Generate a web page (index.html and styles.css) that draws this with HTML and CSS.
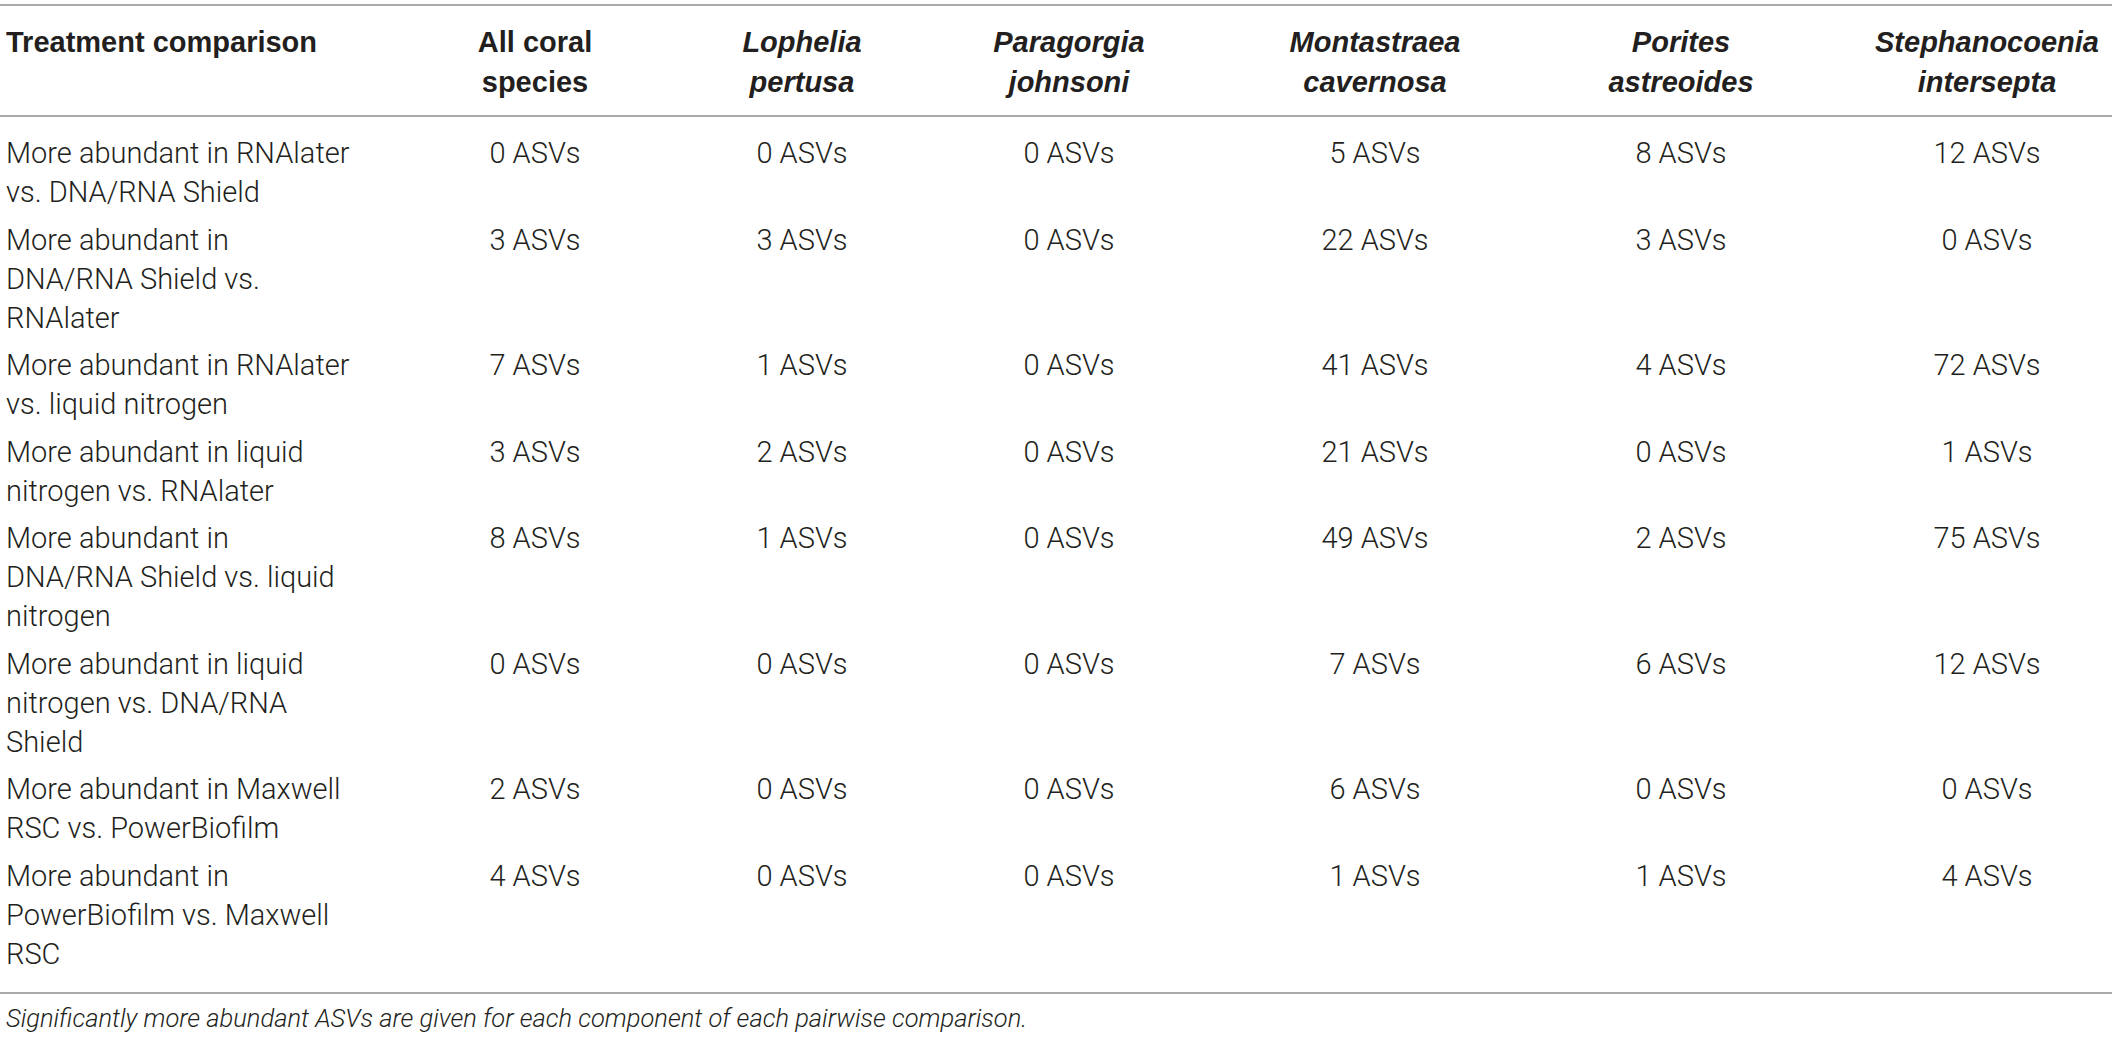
FILE: index.html
```html
<!DOCTYPE html>
<html lang="en">
<head>
  <meta charset="UTF-8">
  <title>Differentially abundant ASVs by treatment</title>
  <link rel="stylesheet" href="styles.css">
</head>
<body>
  <!-- ASV 비교 표 -->
  <table class="asv-table">
    <colgroup>
      <col class="col-treat">
      <col class="col-wide">
      <col class="col-narrow">
      <col class="col-wide">
      <col class="col-mid">
      <col class="col-wide">
      <col class="col-mid">
    </colgroup>
    <thead>
      <tr>
        <th class="treat">Treatment comparison</th>
        <th>All coral<br>species</th>
        <th class="species">Lophelia<br>pertusa</th>
        <th class="species">Paragorgia<br>johnsoni</th>
        <th class="species">Montastraea<br>cavernosa</th>
        <th class="species">Porites<br>astreoides</th>
        <th class="species">Stephanocoenia<br>intersepta</th>
      </tr>
    </thead>
    <tbody>
      <tr>
        <td class="treat">More abundant in RNAlater<br>vs. DNA/RNA Shield</td>
        <td>0 ASVs</td><td>0 ASVs</td><td>0 ASVs</td><td>5 ASVs</td><td>8 ASVs</td><td>12 ASVs</td>
      </tr>
      <tr>
        <td class="treat">More abundant in<br>DNA/RNA Shield vs.<br>RNAlater</td>
        <td>3 ASVs</td><td>3 ASVs</td><td>0 ASVs</td><td>22 ASVs</td><td>3 ASVs</td><td>0 ASVs</td>
      </tr>
      <tr>
        <td class="treat">More abundant in RNAlater<br>vs. liquid nitrogen</td>
        <td>7 ASVs</td><td>1 ASVs</td><td>0 ASVs</td><td>41 ASVs</td><td>4 ASVs</td><td>72 ASVs</td>
      </tr>
      <tr>
        <td class="treat">More abundant in liquid<br>nitrogen vs. RNAlater</td>
        <td>3 ASVs</td><td>2 ASVs</td><td>0 ASVs</td><td>21 ASVs</td><td>0 ASVs</td><td>1 ASVs</td>
      </tr>
      <tr>
        <td class="treat">More abundant in<br>DNA/RNA Shield vs. liquid<br>nitrogen</td>
        <td>8 ASVs</td><td>1 ASVs</td><td>0 ASVs</td><td>49 ASVs</td><td>2 ASVs</td><td>75 ASVs</td>
      </tr>
      <tr>
        <td class="treat">More abundant in liquid<br>nitrogen vs. DNA/RNA<br>Shield</td>
        <td>0 ASVs</td><td>0 ASVs</td><td>0 ASVs</td><td>7 ASVs</td><td>6 ASVs</td><td>12 ASVs</td>
      </tr>
      <tr>
        <td class="treat">More abundant in Maxwell<br>RSC vs. PowerBiofilm</td>
        <td>2 ASVs</td><td>0 ASVs</td><td>0 ASVs</td><td>6 ASVs</td><td>0 ASVs</td><td>0 ASVs</td>
      </tr>
      <tr>
        <td class="treat">More abundant in<br>PowerBiofilm vs. Maxwell<br>RSC</td>
        <td>4 ASVs</td><td>0 ASVs</td><td>0 ASVs</td><td>1 ASVs</td><td>1 ASVs</td><td>4 ASVs</td>
      </tr>
    </tbody>
  </table>
  <p class="note">Significantly more abundant ASVs are given for each component of each pairwise comparison.</p>
</body>
</html>
```

FILE: styles.css
```css
/* 기본 리셋 */
* { margin: 0; padding: 0; box-sizing: border-box; }
body {
  font-family: Roboto, 'Liberation Sans', Arial, sans-serif;
  font-weight: 300;
  color: #231f20;
  background-color: #fff;
  padding-top: 4px;
}
/* 표 */
.asv-table {
  width: 2112px;
  table-layout: fixed;
  border-collapse: separate;
  border-spacing: 0;
  font-size: 29px;
  line-height: 39px;
}
.col-treat { width: 354px; }
.col-wide { width: 362px; }
.col-narrow { width: 172px; }
.col-mid { width: 250px; }
/* 헤더 */
.asv-table th {
  font-family: 'Liberation Sans', Arial, sans-serif;
  font-weight: 700;
  text-align: center;
  vertical-align: top;
  line-height: 40px;
  padding: 16px 0 13px;
  border-top: 2px solid #aaa;
  border-bottom: 2px solid #aaa;
}
.asv-table th.species {
  font-style: italic;
}
.asv-table .treat {
  text-align: left;
  padding-left: 6px;
}
/* 본문 행 */
.asv-table td {
  text-align: center;
  vertical-align: top;
  padding: 4px 0 4.5px;
}
.asv-table td.treat {
  padding-left: 6px;
}
.asv-table tbody tr:first-child td {
  padding-top: 17px;
}
.asv-table tbody tr:last-child td {
  padding-bottom: 18px;
  border-bottom: 2px solid #aaa;
}
/* 각주 */
.note {
  font-style: italic;
  font-size: 25.5px;
  line-height: 30px;
  margin-top: 9px;
  padding-left: 6px;
}
```
